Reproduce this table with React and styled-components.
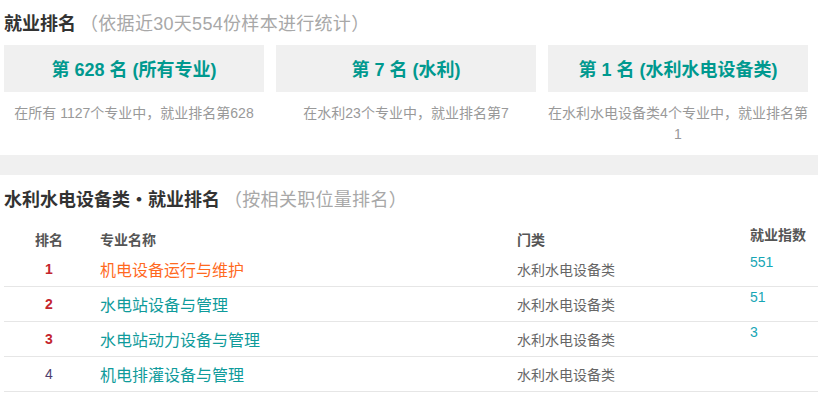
import React from "react";
import styled, { createGlobalStyle } from "styled-components";

const Global = createGlobalStyle`
  html, body { margin: 0; padding: 0; background: #fff; }
  body {
    font-family: "Liberation Sans", "Noto Sans CJK SC", sans-serif;
    color: #333;
  }
`;

const Page = styled.div`
  width: 818px;
  overflow: hidden;
`;

const Section = styled.section`
  padding: 0 0 0 4px;
`;

const Heading = styled.h2`
  margin: 0;
  height: ${(p) => p.$h || "44px"};
  display: flex;
  align-items: center;
  font-size: 18px;
  font-weight: bold;
  color: #333;
  white-space: nowrap;
`;

const HeadNote = styled.span`
  font-weight: normal;
  color: #a8a8a8;
  margin-left: 4px;
  letter-spacing: 0.3px;
`;

const Cards = styled.div`
  display: grid;
  grid-template-columns: repeat(3, 260px);
  column-gap: 12px;
  margin-top: 1px;
`;

const Card = styled.div`
  display: flex;
  flex-direction: column;
`;

const CardBox = styled.div`
  height: 47px;
  padding-bottom: 2px;
  box-sizing: border-box;
  background: #f0f0f0;
  display: flex;
  align-items: center;
  justify-content: center;
  font-size: 18px;
  font-weight: bold;
  color: #00998f;
  white-space: nowrap;
`;

const CardDesc = styled.div`
  margin-top: 11px;
  font-size: 14px;
  line-height: 21px;
  color: #999;
  text-align: center;
`;

const Band = styled.div`
  height: 20px;
  background: #f0f0f0;
  margin-top: 10px;
`;

const Table = styled.div`
  display: flex;
  flex-direction: column;
`;

const Row = styled.div`
  display: grid;
  grid-template-columns: 90px 417px 233px 1fr;
  height: ${(p) => (p.$head ? "31px" : "35px")};
  box-sizing: border-box;
  border-bottom: ${(p) => (p.$head ? "none" : "1px solid #e6e6e6")};
  align-items: center;
  font-size: 14px;
`;

const HeadCell = styled.div`
  font-weight: bold;
  color: #555;
  padding-left: ${(p) => (p.$center ? "0" : "6px")};
  text-align: ${(p) => (p.$center ? "center" : "left")};
  align-self: ${(p) => (p.$top ? "start" : "center")};
  padding-top: ${(p) => (p.$top ? "3px" : "0")};
  margin-top: ${(p) => (p.$top ? "0" : "4px")};
  white-space: nowrap;
`;

const RankCell = styled.div`
  text-align: center;
  font-weight: ${(p) => (p.$top ? "bold" : "normal")};
  color: ${(p) => (p.$top ? "#c4262e" : "#4e3d6e")};
  font-size: 14px;
`;

const NameCell = styled.div`
  padding-left: 6px;
  font-size: 16px;
  color: ${(p) => (p.$hot ? "#ff6a1f" : "#0f9b9b")};
  white-space: nowrap;
`;

const CatCell = styled.div`
  padding-left: 6px;
  color: #666;
  white-space: nowrap;
`;

const IndexCell = styled.div`
  padding-left: 6px;
  align-self: start;
  padding-top: 2px;
  color: #17a6b5;
`;

const cards = [
  { title: "第 628 名 (所有专业)", desc: "在所有 1127个专业中，就业排名第628" },
  { title: "第 7 名 (水利)", desc: "在水利23个专业中，就业排名第7" },
  { title: "第 1 名 (水利水电设备类)", desc: "在水利水电设备类4个专业中，就业排名第1" },
];

const rows = [
  { rank: 1, name: "机电设备运行与维护", cat: "水利水电设备类", idx: "551" },
  { rank: 2, name: "水电站设备与管理", cat: "水利水电设备类", idx: "51" },
  { rank: 3, name: "水电站动力设备与管理", cat: "水利水电设备类", idx: "3" },
  { rank: 4, name: "机电排灌设备与管理", cat: "水利水电设备类", idx: "" },
];

export default function App() {
  return (
    <Page>
      <Global />
      <Section>
        <Heading>
          就业排名<HeadNote>（依据近30天554份样本进行统计）</HeadNote>
        </Heading>
        <Cards>
          {cards.map((c) => (
            <Card key={c.title}>
              <CardBox>{c.title}</CardBox>
              <CardDesc>{c.desc}</CardDesc>
            </Card>
          ))}
        </Cards>
      </Section>
      <Band />
      <Section>
        <Heading $h="46px">
          水利水电设备类・就业排名<HeadNote>（按相关职位量排名）</HeadNote>
        </Heading>
        <Table>
          <Row $head>
            <HeadCell $center>排名</HeadCell>
            <HeadCell>专业名称</HeadCell>
            <HeadCell>门类</HeadCell>
            <HeadCell $top>就业指数</HeadCell>
          </Row>
          {rows.map((r) => (
            <Row key={r.rank}>
              <RankCell $top={r.rank <= 3}>{r.rank}</RankCell>
              <NameCell $hot={r.rank === 1}>{r.name}</NameCell>
              <CatCell>{r.cat}</CatCell>
              <IndexCell>{r.idx}</IndexCell>
            </Row>
          ))}
        </Table>
      </Section>
    </Page>
  );
}
